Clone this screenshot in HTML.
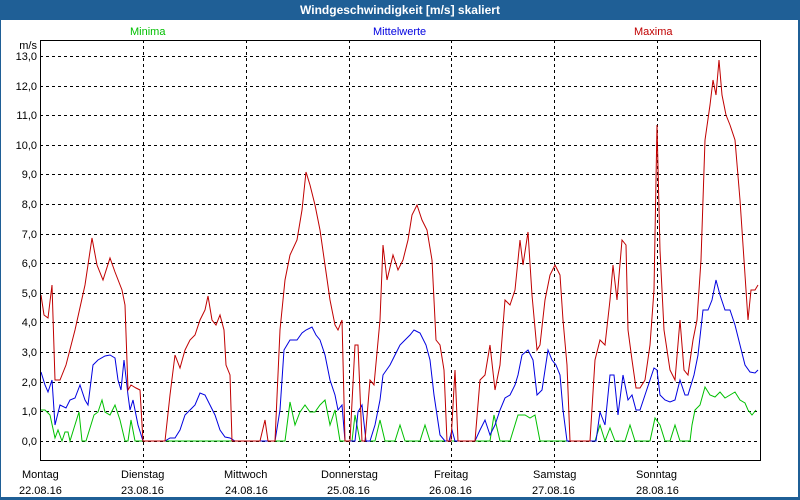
<!DOCTYPE html>
<html><head><meta charset="utf-8"><style>
html,body{margin:0;padding:0;width:800px;height:500px;overflow:hidden;background:#1f5f96;font-family:"Liberation Sans",sans-serif}
#w{position:absolute;left:1px;top:20px;width:797px;height:477px;background:#fff}
#t{position:absolute;left:0;top:0;width:800px;height:20px;color:#fff;font-weight:bold;font-size:12px;line-height:20px;text-align:center}
svg{position:absolute;left:0;top:0}
text{font-family:"Liberation Sans",sans-serif;font-size:11px}
</style></head><body>
<div id="w"></div>
<div id="t">Windgeschwindigkeit [m/s] skaliert</div>
<svg width="800" height="500" viewBox="0 0 800 500">
<g stroke="#000" stroke-width="1" stroke-dasharray="3,3" shape-rendering="crispEdges">
<line x1="40" x2="760" y1="56.5" y2="56.5"/><line x1="40" x2="760" y1="86.5" y2="86.5"/><line x1="40" x2="760" y1="115.5" y2="115.5"/><line x1="40" x2="760" y1="145.5" y2="145.5"/><line x1="40" x2="760" y1="174.5" y2="174.5"/><line x1="40" x2="760" y1="204.5" y2="204.5"/><line x1="40" x2="760" y1="234.5" y2="234.5"/><line x1="40" x2="760" y1="263.5" y2="263.5"/><line x1="40" x2="760" y1="293.5" y2="293.5"/><line x1="40" x2="760" y1="322.5" y2="322.5"/><line x1="40" x2="760" y1="352.5" y2="352.5"/><line x1="40" x2="760" y1="382.5" y2="382.5"/><line x1="40" x2="760" y1="411.5" y2="411.5"/><line x1="40" x2="760" y1="441.5" y2="441.5"/>
<line x1="143.5" x2="143.5" y1="40" y2="468"/><line x1="246.5" x2="246.5" y1="40" y2="468"/><line x1="349.5" x2="349.5" y1="40" y2="468"/><line x1="451.5" x2="451.5" y1="40" y2="468"/><line x1="554.5" x2="554.5" y1="40" y2="468"/><line x1="657.5" x2="657.5" y1="40" y2="468"/>
</g>
<g fill="none" stroke-width="1">
<polyline stroke="#00c000" points="41,410 45,410 50,415 55,438 58,430 62,441 65,432 68,432 70,441 74,428 79,412 82,441 86,441 90,428 94,415 98,412 102,400 105,412 110,415 115,405 120,420 125,441 128,441 131,420 135,441 285,441 290,402 295,425 300,412 305,405 310,412 315,412 320,405 325,400 330,425 335,410 340,441 352,441 355,415 360,441 375,441 380,420 385,441 395,441 400,425 405,441 420,441 425,425 430,441 490,441 494,415 500,441 510,441 518,415 525,415 530,418 535,415 540,441 595,441 600,425 605,441 610,428 615,441 625,441 630,425 635,441 650,441 655,418 660,425 665,441 670,441 675,425 680,441 690,441 692,425 695,410 700,405 705,387 710,395 715,397 720,392 725,398 730,395 735,392 740,400 745,403 748,410 752,415 756,410"/>
<polyline stroke="#0000e0" points="41,372 45,385 48,392 52,380 55,425 60,405 66,408 70,400 75,398 80,385 85,400 88,405 93,365 98,360 105,356 110,355 115,358 118,380 121,390 124,360 128,395 130,410 133,400 138,425 143,441 165,441 170,438 175,438 180,430 185,415 190,410 195,405 200,393 205,395 210,405 215,415 220,430 225,437 230,438 235,441 275,441 280,410 284,350 290,340 297,340 302,333 306,330 312,327 316,335 320,340 325,355 330,380 335,395 338,410 342,405 345,441 355,441 358,412 362,405 366,441 370,441 375,425 380,400 383,375 390,365 395,355 400,345 405,340 410,335 414,330 420,333 426,345 430,360 434,395 440,435 445,441 449,441 452,430 455,441 475,441 480,430 485,420 490,435 495,425 500,410 505,398 510,395 515,385 518,375 522,355 528,350 533,360 537,395 542,390 548,350 552,360 556,365 560,375 563,410 567,441 596,441 600,412 605,425 610,375 614,375 618,415 623,375 628,400 632,395 636,410 640,410 645,395 650,380 654,368 657,370 660,395 665,400 670,402 675,400 680,380 685,395 688,395 694,375 698,355 703,310 708,310 712,300 716,280 720,295 725,310 730,310 735,325 740,345 745,365 750,372 755,373 758,370"/>
<polyline stroke="#c00000" points="41,295 44,315 48,318 52,285 55,380 60,380 66,365 75,330 85,285 92,238 97,265 103,280 110,258 115,272 122,290 125,305 128,390 131,385 136,388 140,390 143,441 165,441 170,395 175,355 180,368 185,350 190,340 195,335 200,320 205,310 208,296 212,320 216,325 220,315 224,330 226,365 230,375 232,441 260,441 265,420 268,441 275,441 280,330 285,280 290,255 297,240 302,210 306,172 310,185 315,205 320,230 325,265 330,300 335,325 338,330 342,320 345,441 350,441 355,345 358,345 362,441 365,441 370,380 374,385 380,320 383,245 387,280 393,255 398,270 403,260 408,240 412,215 417,205 422,220 427,230 432,260 436,340 440,345 444,370 447,441 451,441 455,370 458,441 475,441 480,380 485,375 490,345 495,390 500,365 505,300 510,305 515,290 520,240 523,265 528,232 532,295 537,350 540,345 545,300 550,275 555,265 560,275 563,320 567,365 570,441 590,441 595,360 600,340 605,345 610,300 613,265 617,300 622,240 626,245 628,330 632,360 636,388 640,388 645,380 650,345 654,290 657,125 660,250 664,330 670,370 675,380 680,320 684,370 688,375 693,340 697,320 701,260 705,140 710,105 713,80 716,95 719,60 722,95 726,115 730,125 735,140 740,200 744,260 748,320 751,290 755,290 758,285"/>
</g>
<rect x="40.5" y="40.5" width="720" height="420" fill="none" stroke="#000" stroke-width="1"/>
<g text-anchor="end" fill="#000">
<text x="37" y="49">m/s</text>
<text x="37" y="60">13,0</text><text x="37" y="90">12,0</text><text x="37" y="119">11,0</text><text x="37" y="149">10,0</text><text x="37" y="178">9,0</text><text x="37" y="208">8,0</text><text x="37" y="238">7,0</text><text x="37" y="267">6,0</text><text x="37" y="297">5,0</text><text x="37" y="326">4,0</text><text x="37" y="356">3,0</text><text x="37" y="386">2,0</text><text x="37" y="415">1,0</text><text x="37" y="445">0,0</text>
</g>
<text x="130" y="35" fill="#00c000">Minima</text>
<text x="373" y="35" fill="#0000e0">Mittelwerte</text>
<text x="634" y="35" fill="#c00000">Maxima</text>
<g fill="#000">
<text x="22" y="478">Montag</text><text x="19" y="494">22.08.16</text>
<text x="121" y="478">Dienstag</text><text x="121" y="494">23.08.16</text>
<text x="224" y="478">Mittwoch</text><text x="225" y="494">24.08.16</text>
<text x="321" y="478">Donnerstag</text><text x="327" y="494">25.08.16</text>
<text x="434" y="478">Freitag</text><text x="429" y="494">26.08.16</text>
<text x="533" y="478">Samstag</text><text x="532" y="494">27.08.16</text>
<text x="636" y="478">Sonntag</text><text x="636" y="494">28.08.16</text>
</g>
</svg>
</body></html>
